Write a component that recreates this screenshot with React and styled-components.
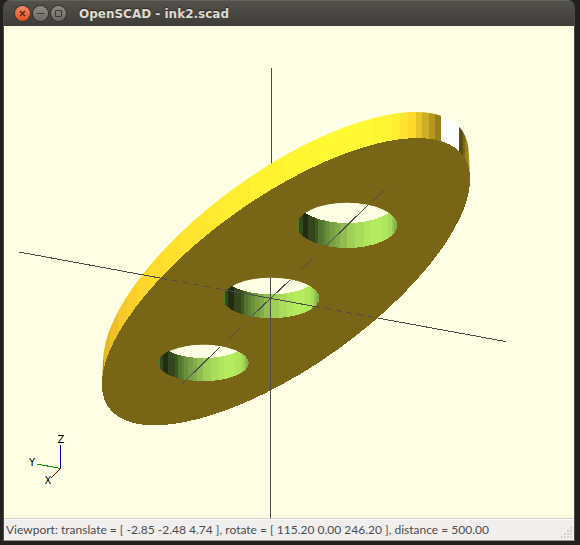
import React from "react";
import styled, { createGlobalStyle } from "styled-components";

const GlobalStyle = createGlobalStyle`
  body {
    margin: 0;
    background: #232120;
  }
`;

const Desktop = styled.div`
  display: flex;
  min-height: 100vh;
  box-sizing: border-box;
  padding: 0 5px 4px 3px;
  background: #232120;
`;

const Window = styled.main`
  flex: 1;
  display: flex;
  flex-direction: column;
  min-width: 0;
  box-sizing: border-box;
  border: 1px solid #4a4945;
  border-top: none;
  border-bottom-color: #969490;
  border-radius: 7px 7px 0 0;
  overflow: hidden;
`;

const TitleBar = styled.header`
  display: flex;
  align-items: center;
  height: 26px;
  padding-left: 11px;
  box-sizing: border-box;
  border-top: 1px solid #62615b;
  background: linear-gradient(#53514b, #3e3d39);
  h1 {
    margin: 0 0 0 13px;
    color: #dfdbd2;
    font: bold 12px/16px "DejaVu Sans", sans-serif;
    text-shadow: 0 -1px 1px #2b2a27;
  }
`;

const WindowButtons = styled.div`
  display: flex;
  gap: 3px;
`;

const WindowButton = styled.button`
  width: 15px;
  height: 15px;
  padding: 0;
  border: none;
  border-radius: 50%;
  background: ${(props) =>
    props.$close
      ? "linear-gradient(#f58a63, #e2501f)"
      : "linear-gradient(#8d8b83, #6a6862)"};
  box-shadow: 0 0 0 1px #34332f;
  svg {
    display: block;
  }
`;

const Viewport = styled.section`
  flex: 1;
  display: flex;
  min-height: 0;
  background: #ffffe5;
  svg {
    flex: 1;
    min-width: 0;
    width: 100%;
  }
`;

const StatusBar = styled.footer`
  display: flex;
  align-items: center;
  justify-content: space-between;
  height: 22px;
  box-sizing: border-box;
  padding: 0 2px;
  border-top: 1px solid #d3d1cc;
  box-shadow: inset 0 1px #fafafa;
  background: #f0efee;
  color: #4c4c4c;
  font: 12px/18px Lato, "Noto Sans", sans-serif;
  white-space: nowrap;
`;

const Grip = styled.svg`
  align-self: flex-end;
  margin-bottom: 2px;
`;

// [start x, colour] of each facet on the outer wall
const WALL = [
  [100, "#b8921c"],
  [104, "#e6b827"],
  [110, "#eec028"],
  [118, "#f5c929"],
  [127, "#f9cf2a"],
  [137, "#fdd62b"],
  [149, "#ffdc2c"],
  [163, "#ffe12d"],
  [181, "#ffe52e"],
  [201, "#ffea2f"],
  [222, "#ffee30"],
  [250, "#fff231"],
  [285, "#fff632"],
  [320, "#fffa33"],
  [372, "#fff532"],
  [392, "#ffed30"],
  [400, "#ffe32e"],
  [408, "#ffd82b"],
  [416, "#e6c428"],
  [422, "#ceae24"],
  [429, "#b59720"],
  [435, "#958019"],
  [441, "#ffffff"],
  [459, "#5c4c10"],
  [463, "#786616"],
  [465, "#9c8119"],
  [468, "#ad901f"],
  [472, "#ad901f"],
];

// [offset, colour] across a hole, left to right
const BORE = [
  [0, "#4d7a30"],
  [0.027, "#34491c"],
  [0.06, "#222c12"],
  [0.116, "#34451b"],
  [0.186, "#3d5721"],
  [0.216, "#55742f"],
  [0.266, "#5c8235"],
  [0.29, "#6b913d"],
  [0.335, "#789f43"],
  [0.385, "#82ab49"],
  [0.43, "#92bd50"],
  [0.5, "#9fcf57"],
  [0.58, "#a8dc5a"],
  [0.67, "#b0e65d"],
  [0.73, "#b5ec5f"],
  [0.85, "#b0e65c"],
  [0.91, "#a6da58"],
  [0.945, "#98c852"],
  [0.97, "#86b04a"],
];

const HOLES = [
  { front: [347, 225.4, 50.3, 22.6], back: [347, 201.5, 49, 21.5] },
  { front: [271, 298, 48.3, 20.2], back: [271, 275, 47, 19.3] },
  { front: [203.3, 363, 45.4, 18.2], back: [203.5, 340.3, 44, 17.8] },
];

const X_AXIS = [
  [181, 385, 220, 347],
  [229, 339, 241, 327],
  [252, 316, 290, 280],
  [301, 270, 313, 258],
  [325, 247, 368, 205],
  [373, 201, 385, 189],
];

const Hole = ({ id, front, back }) => {
  const [cx, cy, rx, ry] = front;
  const [bx, by, brx, bry] = back;
  return (
    <g>
      <clipPath id={id}>
        <ellipse cx={cx} cy={cy} rx={rx} ry={ry} />
      </clipPath>
      <ellipse cx={cx} cy={cy} rx={rx} ry={ry} fill="url(#bore)" />
      <ellipse
        cx={bx}
        cy={by}
        rx={brx}
        ry={bry}
        fill="#ffffe5"
        clipPath={`url(#${id})`}
      />
    </g>
  );
};

const Scene = () => (
  <svg
    viewBox="4 26 570 492"
    role="img"
    aria-label="Elliptical plate with three holes"
    shapeRendering="crispEdges"
  >
    <defs>
      <linearGradient id="bore">
        {BORE.map(([offset, color], i) => (
          <React.Fragment key={offset}>
            <stop offset={offset} stopColor={color} />
            <stop offset={BORE[i + 1] ? BORE[i + 1][0] : 1} stopColor={color} />
          </React.Fragment>
        ))}
      </linearGradient>
      <clipPath id="wall">
        <ellipse
          rx="216.8"
          ry="86.1"
          transform="translate(286 257) rotate(-35.9)"
        />
        <path d="M102 384L103 360L469 154L470 179Z" />
      </clipPath>
    </defs>

    <g stroke="#4d4d50" strokeWidth="1">
      <path d="M271.5 68V170" />
    </g>

    <g clipPath="url(#wall)">
      {WALL.slice(0, -1).map(([x, color], i) => (
        <rect
          key={x}
          x={x}
          y="100"
          width={WALL[i + 1][0] - x}
          height="320"
          fill={color}
        />
      ))}
    </g>
    <ellipse
      rx="217.4"
      ry="85.2"
      transform="translate(286 281.7) rotate(-35.3)"
      fill="#786616"
    />
    {HOLES.map((hole, i) => (
      <Hole key={i} id={`hole${i}`} {...hole} />
    ))}

    <g stroke="#4d4d50" strokeWidth="1" fill="none">
      <path d="M270.5 278V518" />
      <path d="M19 252L161 278.2M223 289.6L314 306.3M378 318.1L506 341.6" />
      <path d="M161 278.2L223 289.6M314 306.3L378 318.1" strokeDasharray="6 5" />
      {X_AXIS.map(([x1, y1, x2, y2]) => (
        <line key={x1} x1={x1} y1={y1} x2={x2} y2={y2} />
      ))}
    </g>

    <g strokeWidth="1">
      <path d="M60.5 469V445" stroke="#0000a8" />
      <path d="M60.5 468.5L37 464" stroke="#009a00" />
      <path d="M60.5 468.5L51 478" stroke="#a00000" />
    </g>
    <g
      fill="#000"
      fontFamily="'DejaVu Sans', sans-serif"
      fontSize="10"
      textAnchor="middle"
    >
      <text x="61" y="443">Z</text>
      <text x="32" y="466">Y</text>
      <text x="48" y="484">X</text>
    </g>
  </svg>
);

const App = () => {
  return (
    <>
      <GlobalStyle />
      <Desktop>
        <Window>
          <TitleBar>
            <WindowButtons>
              <WindowButton $close aria-label="Close">
                <svg viewBox="0 0 15 15" stroke="#5b2412">
                  <path d="M5 5L10 10M10 5L5 10" strokeWidth="1.4" />
                </svg>
              </WindowButton>
              <WindowButton aria-label="Minimize">
                <svg viewBox="0 0 15 15" stroke="#3c3b37">
                  <path d="M4 7.5H11" />
                </svg>
              </WindowButton>
              <WindowButton aria-label="Maximize">
                <svg viewBox="0 0 15 15" stroke="#3c3b37" fill="none">
                  <path d="M4.5 4.5H10.5V10.5H4.5Z" />
                </svg>
              </WindowButton>
            </WindowButtons>
            <h1>OpenSCAD - ink2.scad</h1>
          </TitleBar>
          <Viewport>
            <Scene />
          </Viewport>
          <StatusBar>
            <span>
              Viewport: translate = [ -2.85 -2.48 4.74 ], rotate = [ 115.20 0.00
              246.20 ], distance = 500.00
            </span>
            <Grip width="11" height="11" viewBox="0 0 11 11" fill="#d6d4d0">
              <path d="M9 0h2v2h-2zM6 3h2v2h-2zM9 3h2v2h-2zM3 6h2v2h-2zM6 6h2v2h-2zM9 6h2v2h-2zM0 9h2v2h-2zM3 9h2v2h-2zM6 9h2v2h-2zM9 9h2v2h-2z" />
            </Grip>
          </StatusBar>
        </Window>
      </Desktop>
    </>
  );
};

export default App;
